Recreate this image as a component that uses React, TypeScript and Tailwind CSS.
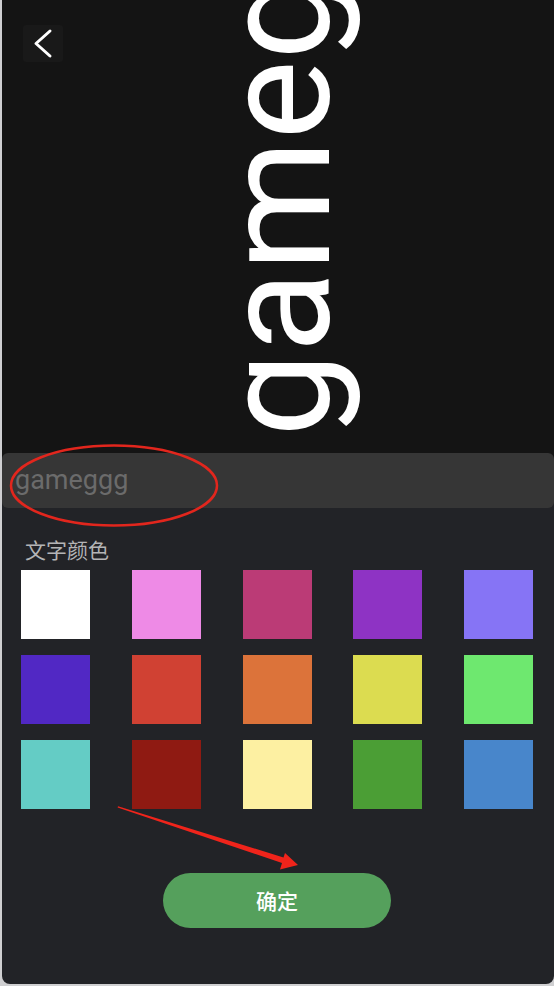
import React from "react";

const swatches: string[][] = [
  ["#ffffff", "#ee8ae6", "#bb3b76", "#8e33c4", "#8674f5"],
  ["#5128c4", "#d04133", "#dc733a", "#dcdc50", "#6ee86f"],
  ["#64ccc5", "#8f1a12", "#fdf0a2", "#4b9e35", "#4886cb"],
];

export default function App() {
  return (
    <div className="relative w-[554px] h-[986px] overflow-hidden bg-[#cfcfd1] pl-[2px] pb-[2px]">
      <div className="flex flex-col h-full rounded-b-[8px] overflow-hidden bg-[#222327]">
        {/* preview area */}
        <div className="relative h-[453px] shrink-0 overflow-hidden bg-[#141414] pt-[25px] pl-[21px]">
          <div className="w-[40px] h-[37px] bg-[#191919] rounded-[3px]">
            <svg width="40" height="37" viewBox="0 0 40 37">
              <polyline
                points="27,6 13,18.5 27,31"
                fill="none"
                stroke="#ffffff"
                strokeWidth="3"
                strokeLinecap="round"
                strokeLinejoin="round"
              />
            </svg>
          </div>
          <div
            className="absolute left-[201px] top-[437px] origin-top-left -rotate-90 whitespace-nowrap text-white text-[150px] leading-none"
            style={{ fontFamily: "Roboto, 'Liberation Sans', sans-serif" }}
          >
            gameggg
          </div>
        </div>

        {/* input */}
        <div className="bg-[linear-gradient(#141414_50%,#222327_50%)]">
          <div
            className="h-[55px] rounded-[6px] bg-[#363636] flex items-center px-[13px] text-[27px] text-[#6b6b6b]"
            style={{ fontFamily: "Roboto, 'Liberation Sans', sans-serif" }}
          >
            gameggg
          </div>
        </div>

        {/* color picker */}
        <div
          className="flex flex-col pl-[19px] pr-[21px]"
          style={{ fontFamily: "'Noto Sans CJK SC', 'Noto Sans', sans-serif" }}
        >
          <div className="mt-[26px] pl-[4px] h-[30px] text-[21px] leading-[30px] text-[#b4b4b6]">
            文字颜色
          </div>
          <div className="mt-[6px] flex flex-col gap-[16px]">
            {swatches.map((row, i) => (
              <div key={i} className="flex justify-between">
                {row.map((c) => (
                  <div key={c} className="w-[69px] h-[69px]" style={{ backgroundColor: c }} />
                ))}
              </div>
            ))}
          </div>
          <button className="mt-[64px] mx-auto w-[228px] h-[55px] rounded-full bg-[#55a05c] text-white text-[21px] font-medium flex items-center justify-center">
            确定
          </button>
        </div>
      </div>

      {/* annotations */}
      <svg
        className="absolute left-0 top-0 pointer-events-none"
        width="554"
        height="986"
        viewBox="0 0 554 986"
      >
        <ellipse cx="114" cy="485.5" rx="103" ry="40" fill="none" stroke="#e2261d" strokeWidth="2.5" />
        <polygon
          points="118,806.2 283.5,857.5 285,853 298,865 280,869.5 282,863 117.6,807.6"
          fill="#f0241b"
        />
      </svg>
    </div>
  );
}
